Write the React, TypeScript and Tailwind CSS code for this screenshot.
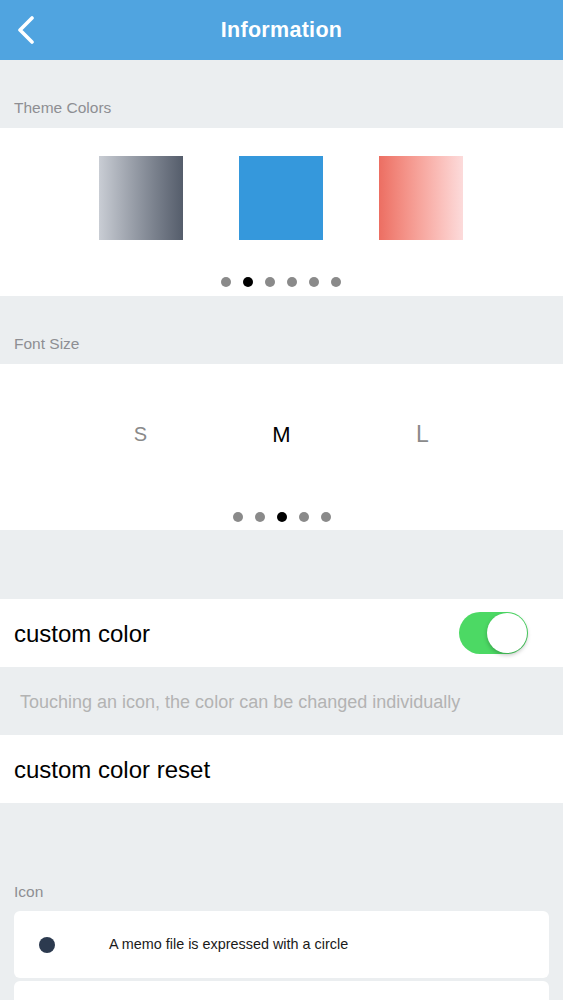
import React from "react";

function Dots({ count, active }: { count: number; active: number }) {
  return (
    <div className="flex items-center justify-center gap-[12px]">
      {Array.from({ length: count }).map((_, i) => (
        <div
          key={i}
          className={
            "w-[10px] h-[10px] rounded-full " + (i === active ? "bg-black" : "bg-[#8a8a8a]")
          }
        />
      ))}
    </div>
  );
}

export default function App() {
  return (
    <div
      className="w-[563px] h-[1000px] overflow-hidden bg-[#ebeef0]"
      style={{ fontFamily: '"Liberation Sans", Arial, sans-serif' }}
    >
      {/* Header */}
      <div className="relative h-[60px] bg-[#50a4e0] flex items-center justify-center">
        <svg
          className="absolute left-[14px] top-[16px]"
          width="24"
          height="28"
          viewBox="0 0 24 28"
          fill="none"
        >
          <path d="M18 2 L6 14 L18 26" stroke="white" strokeWidth="3.6" strokeLinecap="round" strokeLinejoin="round" />
        </svg>
        <span className="text-white text-[21.5px] font-bold tracking-[0.3px] mt-[1px]">Information</span>
      </div>

      {/* Theme Colors */}
      <div className="h-[68px] flex items-end pb-[9px] px-[14px]">
        <span className="text-[15.5px] leading-[23px] text-[#8e8e93]">Theme Colors</span>
      </div>
      <div className="h-[168px] bg-white flex flex-col items-center">
        <div className="flex gap-[56px] mt-[28px] ml-[-1px]">
          <div className="w-[84px] h-[84px] bg-gradient-to-r from-[#c9cdd4] to-[#555d6b]" />
          <div className="w-[84px] h-[84px] bg-[#3598dc]" />
          <div className="w-[84px] h-[84px] bg-gradient-to-r from-[#ec6e62] to-[#fcdbdb]" />
        </div>
        <div className="mt-[37px] ml-[-1px]">
          <Dots count={6} active={1} />
        </div>
      </div>

      {/* Font Size */}
      <div className="h-[68px] flex items-end pb-[9px] px-[14px]">
        <span className="text-[15.5px] leading-[23px] text-[#8e8e93]">Font Size</span>
      </div>
      <div className="h-[166px] bg-white flex flex-col items-center">
        <div className="flex items-center mt-[56px] h-[28px]">
          <div className="w-[141px] text-center text-[20px] text-[#8a8a8a]">S</div>
          <div className="w-[141px] text-center text-[22px] text-black">M</div>
          <div className="w-[141px] text-center text-[23px] text-[#8a8a8a]">L</div>
        </div>
        <div className="mt-[64px]">
          <Dots count={5} active={2} />
        </div>
      </div>

      <div className="h-[69px]" />

      {/* custom color */}
      <div className="h-[68px] bg-white flex items-center justify-between pl-[14px] pr-[35px]">
        <span className="text-[24px] leading-[30px] text-black mt-[2px]">custom color</span>
        <div className="w-[69px] h-[42px] rounded-full bg-[#4cd964] flex items-center justify-end pr-[1px]">
          <div className="w-[40px] h-[40px] rounded-full bg-white shadow-[0_2px_4px_rgba(0,0,0,0.25)]" />
        </div>
      </div>
      <div className="h-[68px] flex items-center px-[20px]">
        <span className="text-[18px] leading-[24px] text-[#b3b3b3] mt-[1px]">
          Touching an icon, the color can be changed individually
        </span>
      </div>
      <div className="h-[68px] bg-white flex items-center px-[14px]">
        <span className="text-[24px] leading-[30px] text-black mt-[2px]">custom color reset</span>
      </div>

      {/* Icon */}
      <div className="h-[108px] flex items-end pb-[8px] px-[14px]">
        <span className="text-[15.5px] leading-[23px] text-[#8e8e93]">Icon</span>
      </div>
      <div className="px-[14px] flex flex-col gap-[3px]">
        <div className="h-[67px] bg-white rounded-[6px] flex items-center">
          <div className="w-[16px] h-[16px] rounded-full bg-[#2c3a4f] ml-[25px]" />
          <span className="ml-[54px] text-[14.4px] text-[#1a1a1a]">
            A memo file is expressed with a circle
          </span>
        </div>
        <div className="h-[67px] bg-white rounded-[6px]" />
      </div>
    </div>
  );
}
